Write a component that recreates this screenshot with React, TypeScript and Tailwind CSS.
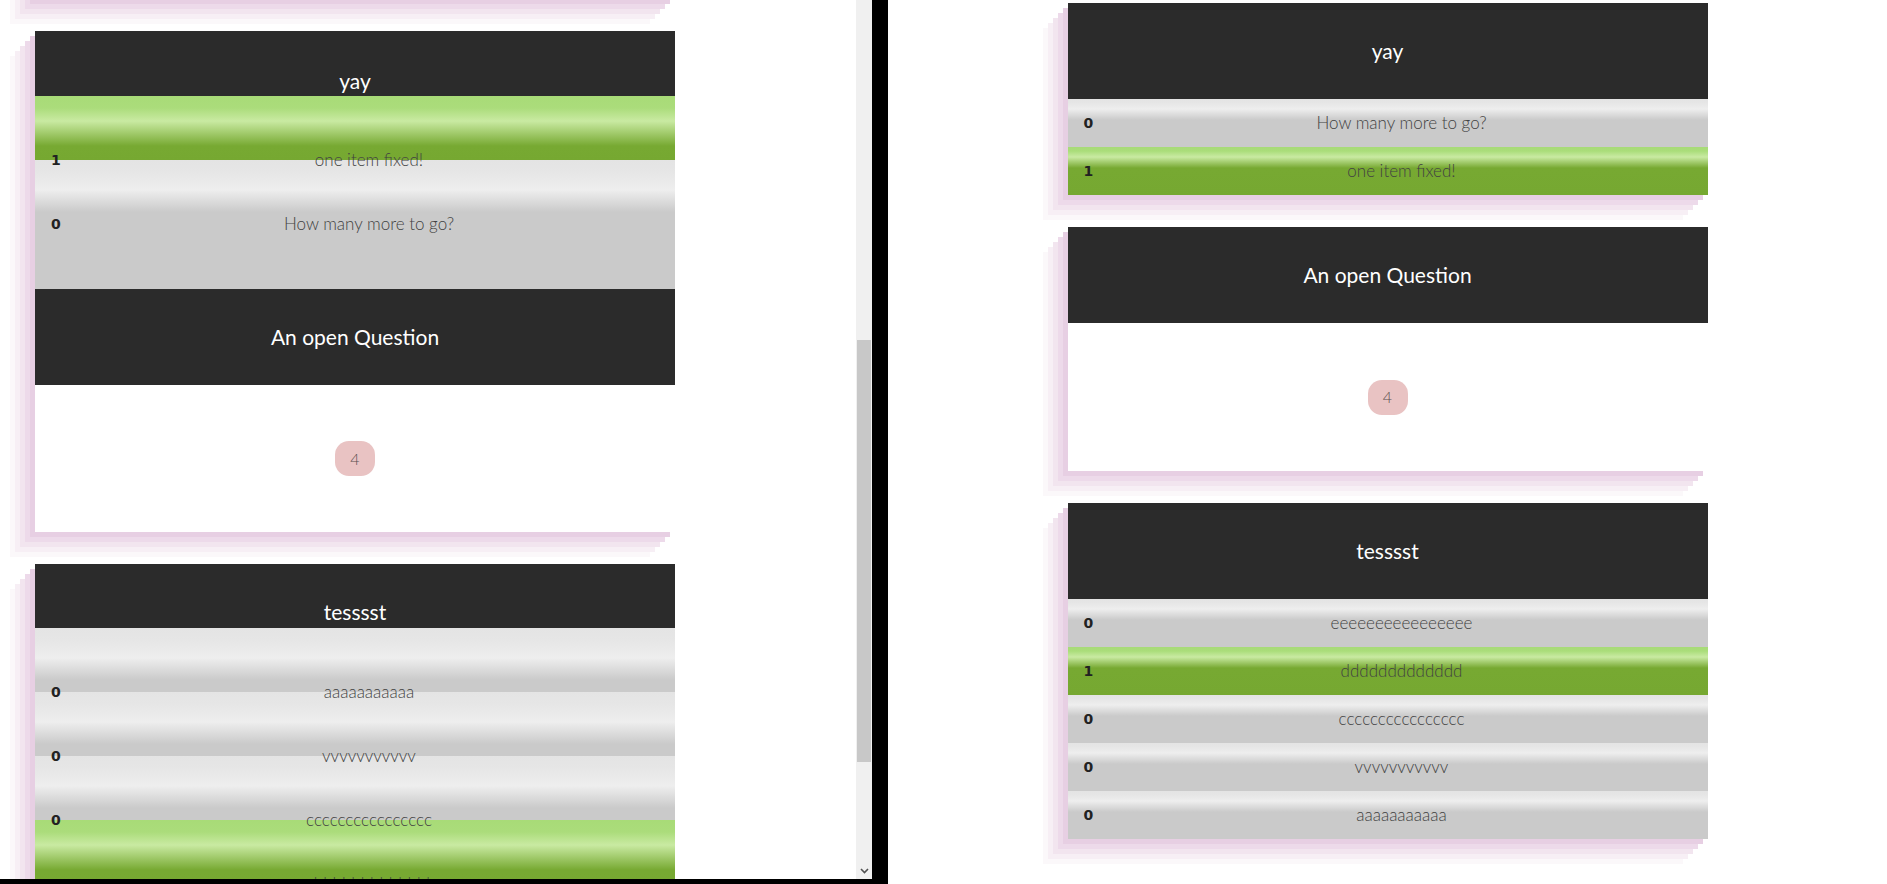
const shadow =
  "shadow-[-5px_5px_0_#e7cfe3,-10px_10px_0_#eddaea,-15px_15px_0_#f2e5ef,-20px_20px_0_#f7eff5,-25px_25px_0_#fbf8fa]";

const grayRow =
  "bg-[linear-gradient(to_bottom,#e4e4e4_0px,#e6e6e6_4px,#eeeeee_10px,#cacaca_21px,#cacaca_100%)]";
const greenRow =
  "bg-[linear-gradient(to_bottom,#a8db77_0px,#aadd7a_4px,#c9eaa2_10px,#77a932_21px,#76a831_100%)]";

// left screenshot: the bands sit half a row above their text
const grayBand =
  "bg-[linear-gradient(to_bottom,#e4e4e4_0px,#e6e6e6_12px,#eeeeee_30px,#cacaca_52px,#cacaca_100%)]";
const greenBand =
  "bg-[linear-gradient(to_bottom,#a8db77_0px,#abdc7b_12px,#c9eaa2_25px,#77a932_50px,#76a831_100%)]";

type Item = { count: number; text: string };

const Row = ({ item, bg, h }: { item: Item; bg: string; h: string }) => (
  <div className={`flex items-center pl-4 ${h} ${bg}`}>
    <span className="w-3 text-[14px] font-bold text-[#222] font-['DejaVu_Sans',sans-serif]">
      {item.count}
    </span>
    <span className="flex-1 text-center text-[17px] font-light text-[#424242] font-['Lato',sans-serif]">
      {item.text}
    </span>
  </div>
);

const Title = ({ text, h }: { text: string; h: string }) => (
  <div
    className={`flex items-center justify-center ${h} text-[21px] text-white font-['Lato',sans-serif]`}
  >
    {text}
  </div>
);

const Badge = () => (
  <div className="flex w-10 h-[35px] items-center justify-center rounded-[14px] bg-[#e9c3c3] text-[16px] font-light text-[#5a5050] font-['Lato',sans-serif]">
    4
  </div>
);

const ListCard = ({ title, items }: { title: string; items: Item[] }) => (
  <div className={`w-[640px] ${shadow}`}>
    <div className="bg-[#2b2b2b]">
      <Title text={title} h="h-24" />
    </div>
    {items.map((it, i) => (
      <Row key={i} item={it} bg={it.count ? greenRow : grayRow} h="h-12" />
    ))}
  </div>
);

const QuestionCard = ({ body }: { body: string }) => (
  <div className={`w-[640px] bg-white ${shadow}`}>
    <div className="bg-[#2b2b2b]">
      <Title text="An open Question" h="h-24" />
    </div>
    <div className={`flex ${body} items-center justify-center`}>
      <Badge />
    </div>
  </div>
);

export default function App() {
  return (
    <div className="flex w-[1887px] h-[884px] overflow-hidden bg-black">
      {/* left window, mid-transition */}
      <div className="flex w-[872px] h-[879px] bg-white">
        <div className="w-[856px] h-full overflow-hidden pl-[35px]">
          <div className={`w-[640px] h-[100px] -mt-[101px] bg-white ${shadow}`} />

          <div className={`mt-8 grid w-[640px] ${shadow}`}>
            <div className="col-start-1 row-start-1">
              <div className="h-[65px] bg-[#2b2b2b]" />
              <div className={`h-16 ${greenBand}`} />
              <div className={`h-16 ${grayBand}`} />
              <div className="h-[65px] bg-[#cacaca]" />
            </div>
            <div className="col-start-1 row-start-1">
              <div className="pt-[3px]">
                <Title text="yay" h="h-[94px]" />
              </div>
              <Row item={{ count: 1, text: "one item fixed!" }} bg="" h="h-16" />
              <Row item={{ count: 0, text: "How many more to go?" }} bg="" h="h-16" />
            </div>
          </div>

          <QuestionCard body="h-[147px]" />

          <div className={`mt-8 grid w-[640px] ${shadow}`}>
            <div className="col-start-1 row-start-1">
              <div className="h-16 bg-[#2b2b2b]" />
              <div className={`h-16 ${grayBand}`} />
              <div className={`h-16 ${grayBand}`} />
              <div className={`h-16 ${grayBand}`} />
              <div className={`h-24 ${greenBand}`} />
            </div>
            <div className="col-start-1 row-start-1">
              <Title text="tesssst" h="h-24" />
              <Row item={{ count: 0, text: "aaaaaaaaaaa" }} bg="" h="h-16" />
              <Row item={{ count: 0, text: "vvvvvvvvvvv" }} bg="" h="h-16" />
              <Row item={{ count: 0, text: "cccccccccccccccc" }} bg="" h="h-16" />
              <Row item={{ count: 1, text: "ddddddddddddd" }} bg="" h="h-16" />
            </div>
          </div>
        </div>

        {/* scrollbar */}
        <div className="flex w-4 h-full flex-col bg-[#f0f0f0]">
          <div className="h-[340px]" />
          <div className="mx-px h-[422px] bg-[#c8c8c8]" />
          <div className="flex-1" />
          <div className="flex h-[17px] items-center justify-center">
            <svg width="9" height="6" viewBox="0 0 9 6">
              <path d="M1 1 L4.5 4.5 L8 1" stroke="#505050" strokeWidth="1.6" fill="none" />
            </svg>
          </div>
        </div>
      </div>

      {/* right window, settled */}
      <div className="ml-4 flex w-[999px] h-full flex-col items-center gap-8 bg-white pt-[3px]">
        <ListCard
          title="yay"
          items={[
            { count: 0, text: "How many more to go?" },
            { count: 1, text: "one item fixed!" },
          ]}
        />
        <QuestionCard body="h-[148px]" />
        <ListCard
          title="tesssst"
          items={[
            { count: 0, text: "eeeeeeeeeeeeeeee" },
            { count: 1, text: "ddddddddddddd" },
            { count: 0, text: "cccccccccccccccc" },
            { count: 0, text: "vvvvvvvvvvv" },
            { count: 0, text: "aaaaaaaaaaa" },
          ]}
        />
      </div>
    </div>
  );
}
